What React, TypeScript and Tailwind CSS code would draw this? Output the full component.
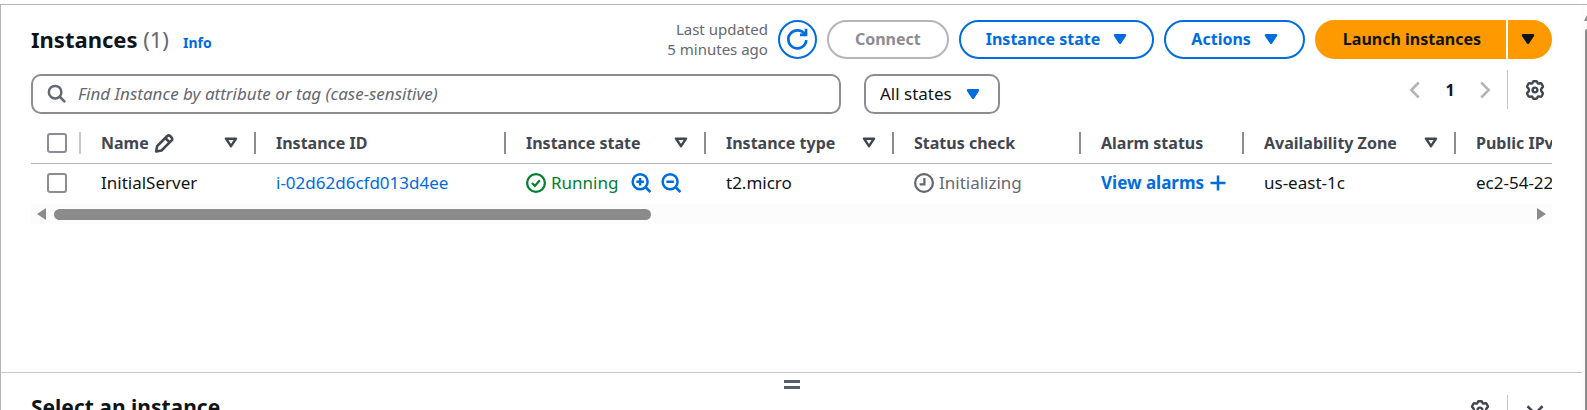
import type { ReactNode } from "react";

type IconProps = { className?: string };

function Caret({ className = "" }: IconProps) {
  return (
    <svg viewBox="0 0 16 16" className={className} fill="currentColor" stroke="currentColor" strokeWidth="2" strokeLinejoin="round" aria-hidden="true">
      <path d="M4 5h8l-4 6z" />
    </svg>
  );
}

function SortIcon() {
  return (
    <svg viewBox="0 0 16 16" className="size-5 shrink-0" fill="none" stroke="currentColor" strokeWidth="2" strokeLinejoin="round" aria-hidden="true">
      <path d="M4 4.500h8l-4 6z" />
    </svg>
  );
}

function RefreshIcon() {
  return (
    <svg viewBox="0 0 16 16" className="size-6" fill="none" stroke="currentColor" strokeWidth="1.800" aria-hidden="true">
      <path d="M10 5.200h4V1.200" />
      <path d="M14.200 8.800A6 6 0 1 1 13.400 5.200" />
    </svg>
  );
}

function SearchIcon() {
  return (
    <svg viewBox="0 0 16 16" className="size-5" fill="none" stroke="currentColor" strokeWidth="2" aria-hidden="true">
      <circle cx="6.500" cy="6.500" r="5" />
      <path d="m14.500 14.500-4.500-4.500" />
    </svg>
  );
}

function ZoomIcon({ plus }: { plus: boolean }) {
  return (
    <svg viewBox="0 0 16 16" className="size-5" fill="none" stroke="currentColor" strokeWidth="2" aria-hidden="true">
      <circle cx="7.300" cy="7" r="6" />
      <path d="M15.500 15.200 11.500 11.200M4.300 7h6" />
      {plus && <path d="M7.300 4v6" />}
    </svg>
  );
}

function EditIcon() {
  return (
    <svg viewBox="0 0 16 16" className="size-5" fill="none" stroke="currentColor" strokeWidth="2" strokeLinejoin="round" aria-hidden="true">
      <path d="m1.700 14.800.8-4.300L10.600 2.400a1.700 1.700 0 0 1 2.300 0l1.200 1.200a1.700 1.700 0 0 1 0 2.300L6 14z" />
      <path d="m9 4 3.500 3.500" />
    </svg>
  );
}

function GearIcon() {
  return (
    <svg viewBox="0 0 20 20" className="size-5" fill="none" stroke="currentColor" strokeWidth="2.400" strokeLinejoin="round" aria-hidden="true">
      <circle cx="10" cy="10" r="2.400" />
      <path d="M8.700 1.300h2.600q.8 0 1 .9.400 1.700 2 1.300l1-.2q.9-.2 1.300.5l1.200 2.200q.4.700-.2 1.300-1.600 1.300-1.600 2.700t1.600 2.700q.6.600.2 1.300l-1.200 2.200q-.4.700-1.300.5l-1-.2q-1.600-.4-2 1.300-.2.900-1 .9H8.700q-.8 0-1-.9-.4-1.700-2-1.300l-1 .2q-.9.200-1.300-.5L2.200 14q-.4-.7.200-1.300Q4 11.400 4 10T2.400 7.300Q1.800 6.700 2.200 6l1.200-2.200q.4-.7 1.300-.5l1 .2q1.600.4 2-1.300.2-.9 1-.9z" />
    </svg>
  );
}

function Chevron({ d }: { d: string }) {
  return (
    <svg viewBox="0 0 16 16" className="size-5" fill="none" stroke="currentColor" strokeWidth="2" aria-hidden="true">
      <path d={d} />
    </svg>
  );
}

function CheckCircle() {
  return (
    <svg viewBox="0 0 16 16" className="size-5 shrink-0" fill="none" stroke="currentColor" strokeWidth="1.800" aria-hidden="true">
      <circle cx="8" cy="8" r="7.100" />
      <path d="m4.800 8 2.300 2.300 4-4.500" />
    </svg>
  );
}

function ClockCircle() {
  return (
    <svg viewBox="0 0 16 16" className="size-5 shrink-0" fill="none" stroke="currentColor" strokeWidth="1.800" aria-hidden="true">
      <circle cx="8" cy="8" r="7.100" />
      <path d="M8.300 4v5H4.500" />
    </svg>
  );
}

function OutlineButton({ children }: { children: ReactNode }) {
  return (
    <button type="button" className="flex h-[39px] items-center gap-[10px] rounded-full border-2 border-[#006ce0] pr-[22px] pl-[25px] font-bold whitespace-nowrap text-[#006ce0]">
      {children}
      <Caret className="size-5" />
    </button>
  );
}

const columns = [
  { label: "Name", width: "w-[175px]", sort: true, edit: true },
  { label: "Instance ID", width: "w-[250px]" },
  { label: "Instance state", width: "w-[200px]", sort: true },
  { label: "Instance type", width: "w-[188px]", sort: true },
  { label: "Status check", width: "w-[187px]" },
  { label: "Alarm status", width: "w-[163px]" },
  { label: "Availability Zone", width: "w-[212px]", sort: true },
  { label: "Public IPv4 DNS", width: "w-[460px]", sort: true },
];

const box = "block size-5 appearance-none rounded-[3px] border-2 border-[#8c8c94] bg-white";

export default function App() {
  return (
    <div className="flex h-screen overflow-hidden bg-white pt-1 font-['Noto_Sans',sans-serif] text-base leading-6 text-[#0f141a]">
      <div className="flex min-w-0 flex-1 flex-col border-t border-l border-[#b4b4bb]">
        <main className="min-h-0 flex-1 overflow-hidden px-[30px] pt-[14px]">
          <header className="flex items-center justify-between">
            <div className="flex items-baseline">
              <h1 className="text-[22px] leading-8 font-bold">
                Instances <span className="font-normal text-[#656871]">(1)</span>
              </h1>
              <a href="#info" className="ml-[14px] text-sm font-bold text-[#006ce0]">Info</a>
            </div>
            <div className="flex items-center gap-[10px]">
              <p className="text-right text-[15px] leading-5 text-[#656871]">
                Last updated
                <br />5 minutes ago
              </p>
              <button type="button" aria-label="Refresh" className="flex size-[39px] items-center justify-center rounded-full border-2 border-[#006ce0] text-[#006ce0]">
                <RefreshIcon />
              </button>
              <button type="button" disabled className="h-[39px] rounded-full border-2 border-[#b4b4bb] px-[26px] font-bold text-[#8c8c94]">
                Connect
              </button>
              <OutlineButton>Instance state</OutlineButton>
              <OutlineButton>Actions</OutlineButton>
              <div className="flex gap-[2px]">
                <button type="button" className="h-[39px] rounded-l-full bg-[#ff9900] pr-[25px] pl-7 font-bold whitespace-nowrap">
                  Launch instances
                </button>
                <button type="button" aria-label="More launch options" className="flex h-[39px] w-11 items-center rounded-r-full bg-[#ff9900] pl-[10px]">
                  <Caret className="size-5" />
                </button>
              </div>
            </div>
          </header>

          <div className="mt-[15px] flex items-start justify-between">
            <div className="flex flex-1 gap-[23px]">
              <label className="flex h-10 w-full max-w-[810px] items-center gap-[11px] rounded-[10px] border-2 border-[#8c8c94] px-[14px] text-[17px] text-[#656871]">
                <SearchIcon />
                <input
                  type="text"
                  aria-label="Find Instance by attribute or tag"
                  placeholder="Find Instance by attribute or tag (case-sensitive)"
                  className="min-w-0 flex-1 outline-none placeholder:text-[#656871] placeholder:italic"
                />
              </label>
              <div className="relative shrink-0">
                <select aria-label="Instance states" className="h-10 w-[136px] appearance-none rounded-[10px] border-2 border-[#8c8c94] bg-white pl-[14px] text-[17px]">
                  <option>All states</option>
                </select>
                <Caret className="pointer-events-none absolute top-[10px] right-[17px] size-5 text-[#006ce0]" />
              </div>
            </div>
            <div className="-mt-1 flex h-[39px] items-center text-[#424650]">
              <button type="button" aria-label="Previous page" disabled className="text-[#b4b4bb]"><Chevron d="M11 2 5 8l6 6" /></button>
              <button type="button" aria-label="Page 1" aria-current="page" className="w-[50px] font-bold text-[#0f141a]">1</button>
              <button type="button" aria-label="Next page" disabled className="text-[#b4b4bb]"><Chevron d="m5 2 6 6-6 6" /></button>
              <span className="ml-3 h-full w-px bg-[#c6c6cd]" />
              <button type="button" aria-label="Preferences" className="mr-[7px] ml-[17px]"><GearIcon /></button>
            </div>
          </div>

          <div className="mt-[10px] overflow-hidden">
            <table className="w-[1885px] table-fixed text-left">
              <thead>
                <tr className="h-[39px] border-b border-[#b4b4bb] text-[#424650]">
                  <th className="w-[50px] p-0">
                    <div className="flex h-[22px] items-center border-r-2 border-[#c6c6cd] pl-4">
                      <input type="checkbox" aria-label="Select all instances" className={box} />
                    </div>
                  </th>
                  {columns.map((c) => (
                    <th key={c.label} className={`${c.width} p-0 font-bold`}>
                      <div className="flex h-[22px] items-center justify-between border-r-2 border-[#8c8c94] pr-[13px] pl-5 whitespace-nowrap">
                        <span className="flex items-center gap-[5px]">
                          {c.label}
                          {c.edit && <EditIcon />}
                        </span>
                        {c.sort && <SortIcon />}
                      </div>
                    </th>
                  ))}
                </tr>
              </thead>
              <tbody>
                <tr className="h-10 text-[17px] whitespace-nowrap">
                  <td className="p-0 pl-4"><input type="checkbox" aria-label="Select InitialServer" className={box} /></td>
                  <td className="p-0 pl-5">InitialServer</td>
                  <td className="p-0 pl-5"><a href="#instance" className="text-[#006ce0]">i-02d62d6cfd013d4ee</a></td>
                  <td className="p-0 pl-5">
                    <div className="flex items-center">
                      <span className="flex w-[105px] items-center gap-[5px] text-[#00802f]"><CheckCircle />Running</span>
                      <button type="button" aria-label="Filter in" className="text-[#006ce0]"><ZoomIcon plus /></button>
                      <button type="button" aria-label="Filter out" className="ml-[10px] text-[#006ce0]"><ZoomIcon plus={false} /></button>
                    </div>
                  </td>
                  <td className="p-0 pl-5">t2.micro</td>
                  <td className="p-0 pl-5"><span className="flex items-center gap-[5px] text-[#656871]"><ClockCircle />Initializing</span></td>
                  <td className="p-0 pl-5">
                    <button type="button" className="flex items-center gap-1 text-[17px] font-bold text-[#006ce0]">View alarms <Chevron d="M8 2v12M2 8h12" /></button>
                  </td>
                  <td className="p-0 pl-5">us-east-1c</td>
                  <td className="p-0 pl-5">ec2-54-227-15-101.compute-1.amazonaws.com</td>
                </tr>
              </tbody>
            </table>
          </div>
          <div className="mt-px flex h-5 items-center justify-between bg-[#fcfcfc] px-[6px] text-[#8b8b8b]">
            <svg viewBox="0 0 10 12" className="h-3 w-[10px]" fill="currentColor" aria-hidden="true"><path d="M9 0v12L0 6z" /></svg>
            <div className="mx-[7px] flex-1"><div className="h-[11px] w-[40.5%] rounded-full bg-[#8b8b8b]" /></div>
            <svg viewBox="0 0 10 12" className="h-3 w-[10px]" fill="currentColor" aria-hidden="true"><path d="M1 0v12l9-6z" /></svg>
          </div>
        </main>

        <section className="h-[38px] shrink-0 overflow-hidden border-t border-[#c6c6cd]">
          <button type="button" aria-label="Resize panel" className="mx-auto mt-[7px] flex h-[9px] w-4 flex-col justify-between">
            <span className="h-[3px] w-full bg-[#5a5e68]" />
            <span className="h-[3px] w-full bg-[#5a5e68]" />
          </button>
          <div className="flex items-start justify-between pr-[37px] pl-[30px]">
            <h2 className="text-[21px] leading-9 font-bold">Select an instance</h2>
            <div className="mt-[6px] flex h-10 items-start text-[#424650]">
              <button type="button" aria-label="Panel preferences" className="mt-[5px]"><GearIcon /></button>
              <span className="ml-[17px] h-full w-px bg-[#c6c6cd]" />
              <button type="button" aria-label="Close panel" className="mt-[5px] ml-[17px]"><Chevron d="m2 5 6 6 6-6" /></button>
            </div>
          </div>
        </section>
      </div>
      <div className="flex w-[5px] shrink-0 flex-col items-end overflow-hidden border-t border-[#b4b4bb] bg-[#fcfcfc]">
        <svg viewBox="0 0 3 6" className="mt-[10px] h-[6px] w-[3px]" fill="#8b8b8b" aria-hidden="true"><path d="M0 6 3 0v6z" /></svg>
        <div className="mt-2 w-[2px] flex-1 rounded-tl-full bg-[#8b8b8b]" />
      </div>
    </div>
  );
}
